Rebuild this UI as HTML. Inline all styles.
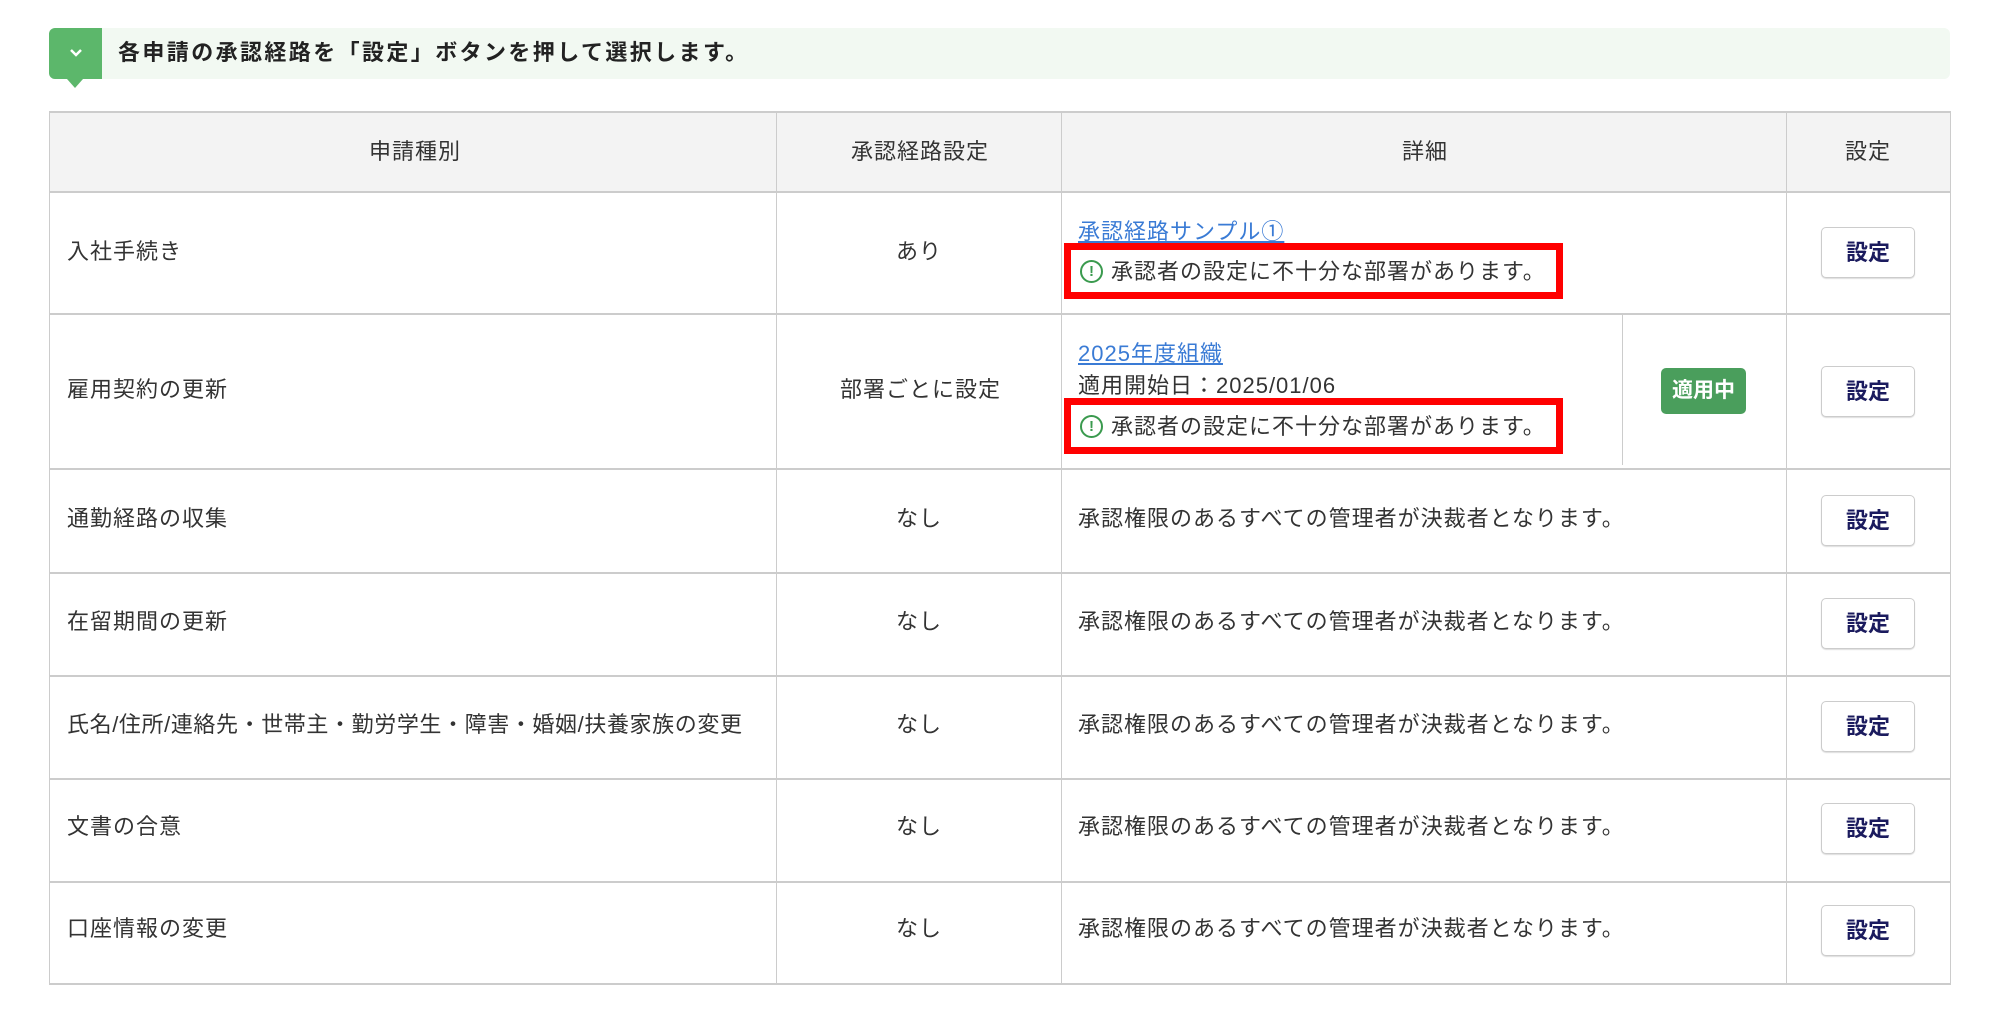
<!DOCTYPE html>
<html><head><meta charset="utf-8"><style>
*{margin:0;padding:0;box-sizing:border-box}
body{width:2000px;height:1032px;background:#fff;font-family:"Liberation Sans","Noto Sans CJK JP",sans-serif;color:#333;position:relative;overflow:hidden}
.banner{position:absolute;left:49px;top:28px;width:1901px;height:51px;background:#f2f9f2;border-radius:6px}
.gsq{position:absolute;left:49px;top:28px;width:53px;height:51px;background:#5cb76b;border-radius:6px 0 0 6px}
.gsq:after{content:"";position:absolute;left:18px;top:51px;border-left:8px solid transparent;border-right:8px solid transparent;border-top:9px solid #5cb76b}
.gsq svg{position:absolute;left:19px;top:18px}
.btitle{position:absolute;left:118px;top:36px;font-size:22px;font-weight:bold;color:#222;letter-spacing:2.4px;line-height:34px}
.t{position:absolute;font-size:22px;letter-spacing:1px;white-space:nowrap;line-height:30px}
.hl{position:absolute;background:#ccc}
.hdr{position:absolute;left:50px;top:112px;width:1900px;height:80px;background:#f3f3f3}
.btn{position:absolute;left:1821px;width:94px;height:51px;border:1px solid #ccc;border-radius:5px;background:#fff;font-weight:bold;color:#1b1b5e;font-size:22px;text-align:center;line-height:49px;box-shadow:0 1px 1px #ddd}
.red{position:absolute;left:1064px;width:499px;height:56px;border:7px solid #f00}
a{color:#3a7bd5;text-decoration:underline}
.warn{display:inline-block;position:relative;top:-2px;width:23px;height:23px;border:2px solid #3a9a4e;border-radius:50%;color:#3a9a4e;font-size:15px;font-weight:bold;text-align:center;line-height:19px;vertical-align:middle;margin-right:8px;letter-spacing:0}
.badge{position:absolute;left:1661px;top:368px;width:85px;height:46px;background:#4a9e5c;border-radius:5px;color:#fff;font-weight:bold;font-size:21px;text-align:center;line-height:46px}
</style></head><body>
<div class="banner"></div>
<div class="gsq"><svg width="16" height="14" viewBox="0 0 16 14"><path d="M3 4 L8 9 L13 4" stroke="#fff" stroke-width="2.5" fill="none"/></svg></div>
<div class="btitle">各申請の承認経路を「設定」ボタンを押して選択します。</div>

<div class="hdr"></div>
<div class="hl" style="left:49px;top:111px;width:1902px;height:2px"></div>
<div class="hl" style="left:49px;top:191px;width:1902px;height:2px"></div>
<div class="hl" style="left:49px;top:313px;width:1902px;height:2px"></div>
<div class="hl" style="left:49px;top:468px;width:1902px;height:2px"></div>
<div class="hl" style="left:49px;top:572px;width:1902px;height:2px"></div>
<div class="hl" style="left:49px;top:675px;width:1902px;height:2px"></div>
<div class="hl" style="left:49px;top:778px;width:1902px;height:2px"></div>
<div class="hl" style="left:49px;top:881px;width:1902px;height:2px"></div>
<div class="hl" style="left:49px;top:983px;width:1902px;height:2px"></div>
<div class="hl" style="left:49px;top:111px;width:1px;height:874px"></div>
<div class="hl" style="left:776px;top:111px;width:1px;height:874px"></div>
<div class="hl" style="left:1061px;top:111px;width:1px;height:874px"></div>
<div class="hl" style="left:1786px;top:111px;width:1px;height:874px"></div>
<div class="hl" style="left:1950px;top:111px;width:1px;height:874px"></div>
<div class="hl" style="left:1622px;top:315px;width:1px;height:150px"></div>

<div class="t" style="left:369px;top:137px">申請種別</div>
<div class="t" style="left:851px;top:137px">承認経路設定</div>
<div class="t" style="left:1402px;top:137px">詳細</div>
<div class="t" style="left:1845px;top:137px">設定</div>

<div class="t" style="left:67px;top:237px">入社手続き</div>
<div class="t" style="left:896px;top:237px">あり</div>
<div class="t" style="left:1078px;top:217px"><a>承認経路サンプル①</a></div>
<div class="red" style="top:243px"></div>
<div class="t" style="left:1080px;top:257px"><span class="warn">!</span>承認者の設定に不十分な部署があります。</div>
<div class="btn" style="top:227px">設定</div>

<div class="t" style="left:67px;top:375px">雇用契約の更新</div>
<div class="t" style="left:840px;top:375px">部署ごとに設定</div>
<div class="t" style="left:1078px;top:339px"><a>2025年度組織</a></div>
<div class="t" style="left:1078px;top:371px">適用開始日：2025/01/06</div>
<div class="red" style="top:398px"></div>
<div class="t" style="left:1080px;top:412px"><span class="warn">!</span>承認者の設定に不十分な部署があります。</div>
<div class="badge">適用中</div>
<div class="btn" style="top:366px">設定</div>

<div class="t" style="left:67px;top:504px">通勤経路の収集</div>
<div class="t" style="left:896px;top:504px">なし</div>
<div class="t" style="left:1078px;top:504px">承認権限のあるすべての管理者が決裁者となります。</div>
<div class="btn" style="top:495px">設定</div>

<div class="t" style="left:67px;top:607px">在留期間の更新</div>
<div class="t" style="left:896px;top:607px">なし</div>
<div class="t" style="left:1078px;top:607px">承認権限のあるすべての管理者が決裁者となります。</div>
<div class="btn" style="top:598px">設定</div>

<div class="t" style="left:67px;top:710px;letter-spacing:0.6px">氏名/住所/連絡先・世帯主・勤労学生・障害・婚姻/扶養家族の変更</div>
<div class="t" style="left:896px;top:710px">なし</div>
<div class="t" style="left:1078px;top:710px">承認権限のあるすべての管理者が決裁者となります。</div>
<div class="btn" style="top:701px">設定</div>

<div class="t" style="left:67px;top:812px">文書の合意</div>
<div class="t" style="left:896px;top:812px">なし</div>
<div class="t" style="left:1078px;top:812px">承認権限のあるすべての管理者が決裁者となります。</div>
<div class="btn" style="top:803px">設定</div>

<div class="t" style="left:67px;top:914px">口座情報の変更</div>
<div class="t" style="left:896px;top:914px">なし</div>
<div class="t" style="left:1078px;top:914px">承認権限のあるすべての管理者が決裁者となります。</div>
<div class="btn" style="top:905px">設定</div>
</body></html>
